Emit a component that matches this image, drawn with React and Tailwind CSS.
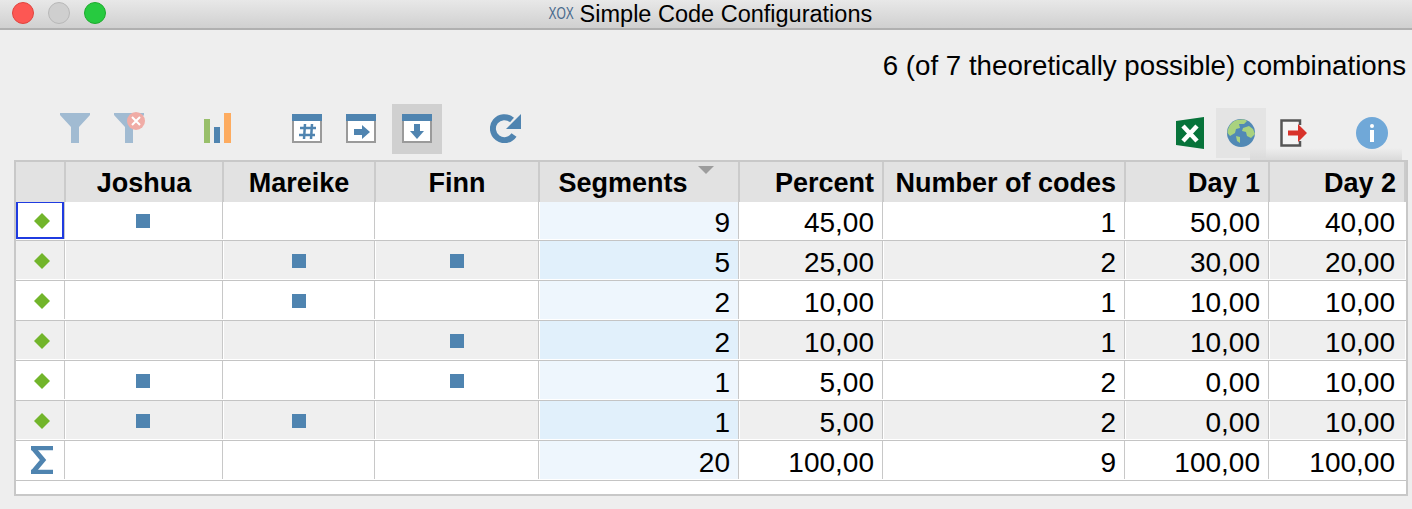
const rows = [
  { j: 1, m: 0, f: 0, v: ["9", "45,00", "1", "50,00", "40,00"] },
  { j: 0, m: 1, f: 1, v: ["5", "25,00", "2", "30,00", "20,00"] },
  { j: 0, m: 1, f: 0, v: ["2", "10,00", "1", "10,00", "10,00"] },
  { j: 0, m: 0, f: 1, v: ["2", "10,00", "1", "10,00", "10,00"] },
  { j: 1, m: 0, f: 1, v: ["1", "5,00", "2", "0,00", "10,00"] },
  { j: 1, m: 1, f: 0, v: ["1", "5,00", "2", "0,00", "10,00"] },
];

const gridCols = "grid grid-cols-[50px_158px_152px_164px_200px_144px_242px_144px_1fr]";

function Square({ left }) {
  return <div className={`w-3.5 h-3.5 mt-0.5 bg-[#4f84b0] ${left ? "mr-0.5" : ""}`} />;
}

function Diamond() {
  return (
    <svg width="16" height="16" viewBox="0 0 16 16" className="mt-0.5">
      <path d="M8 0 L16 8 L8 16 L0 8 Z" fill="#72b52b" />
    </svg>
  );
}

function Sigma() {
  return (
    <svg width="24" height="28" viewBox="0 0 24 28">
      <path d="M1 2 H23 M23 26 H1" stroke="#4f84b0" strokeWidth="4.5" fill="none" />
      <path d="M3 2 L13 14 L3 26" stroke="#4f84b0" strokeWidth="5" fill="none" />
    </svg>
  );
}

function Filter({ x }) {
  return (
    <div className="relative w-7.5 h-7.5 -mt-0.5">
      <svg width="30" height="30" viewBox="0 0 30 30">
        <path d="M0 0 H30 V2 L19 14 V30 H11 V14 L0 2 Z" fill="#a1bbd2" />
      </svg>
      {x && (
        <div className="absolute -top-px -right-px w-4.5 h-4.5 rounded-full bg-[#f0aca6] flex items-center justify-center">
          <svg width="10" height="10" viewBox="0 0 10 10">
            <path d="M1 1 L9 9 M9 1 L1 9" stroke="#fff" strokeWidth="2" />
          </svg>
        </div>
      )}
    </div>
  );
}

function Bars() {
  return (
    <svg width="28" height="30" viewBox="0 0 28 30" className="-mt-0.5">
      <rect x="0" y="6" width="6" height="24" fill="#98bf6a" />
      <rect x="10" y="14" width="6" height="16" fill="#4f84b0" />
      <rect x="20" y="0" width="7" height="30" fill="#fdab5f" />
    </svg>
  );
}

function TableIcon({ children }) {
  return (
    <svg width="30" height="30" viewBox="0 0 30 30">
      <rect x="0" y="0" width="30" height="7" fill="#4f84b0" />
      <rect x="0" y="7" width="30" height="22" fill="#fff" />
      <path d="M1 7 V28 H29 V7" fill="none" stroke="#9a9a9a" strokeWidth="2" />
      {children}
    </svg>
  );
}

function Refresh() {
  return (
    <svg width="32" height="30" viewBox="0 0 32 30" className="-mt-0.5">
      <path d="M24 22 A11.5 11.5 0 1 1 22 7" fill="none" stroke="#4f84b0" strokeWidth="6" />
      <path d="M31 1 V16 H16 Z" fill="#4f84b0" />
    </svg>
  );
}

function Excel() {
  return (
    <svg width="28" height="32" viewBox="0 0 28 32">
      <path d="M0 4 L28 0 V32 L0 28 Z" fill="#07733a" />
      <path d="M7 9 L21 24 M21 9 L7 24" stroke="#fff" strokeWidth="4.5" />
    </svg>
  );
}

function Globe() {
  return (
    <svg width="28" height="28" viewBox="0 0 28 28">
      <circle cx="14" cy="14" r="14" fill="#5189b5" />
      <path d="M6 3 C10 0 18 0 20 2 L17 5 L12 5 L13 9 L9 10 L8 14 L3 17 L0.5 14 C0.5 10 3 5 6 3 Z" fill="#a9d27e" />
      <path d="M16 9 L22 7 L26 10 L28 15 L24 19 L20 17 L19 13 L15 12 Z" fill="#a9d27e" />
      <path d="M9 17 L13 18 L13 24 L10 22 Z" fill="#a9d27e" />
    </svg>
  );
}

function Exit() {
  return (
    <svg width="28" height="28" viewBox="0 0 28 28">
      <path d="M20 6 V1.5 H1.5 V26.5 H20 V22" fill="#f4f4f4" stroke="#555" strokeWidth="2.5" />
      <path d="M8 11.5 H18 V5 L27 14 L18 23 V16.5 H8 Z" fill="#d8322a" />
    </svg>
  );
}

function Info() {
  return (
    <div className="w-8 h-8 rounded-full bg-[#70a8d8] flex flex-col items-center justify-center gap-0.5">
      <div className="w-1 h-1 bg-white rounded-full" />
      <div className="w-1 h-3 bg-white" />
    </div>
  );
}

function HeaderCell({ children, align = "center", sorted }) {
  const al = align === "right" ? "justify-end pr-2" : sorted ? "justify-center pr-8" : "justify-center";
  return (
    <div className={`relative flex items-center pt-0.5 ${al} border-r-2 border-[#cbcbcb] font-bold text-[27px] leading-7 text-black`}>
      {children}
      {sorted && (
        <div className="absolute top-1 right-6 w-0 h-0 border-l-8 border-r-8 border-t-8 border-l-transparent border-r-transparent border-t-[#9d9d9d]" />
      )}
    </div>
  );
}

function Cell({ children, center, tint, last }) {
  const al = center ? "justify-center" : last ? "justify-end pr-2.5 pt-1.5" : "justify-end pr-2 pt-1.5";
  return (
    <div className="flex pr-px pb-px">
      <div className={`flex-1 flex items-center ${al} ${last ? "" : "border-r"} border-[#c8c8c8] ${tint}`}>
        {children}
      </div>
    </div>
  );
}

function Row({ icon, j, m, f, v, alt, first }) {
  const plain = alt ? "bg-[#efefef]" : "bg-white";
  const tint = alt ? "bg-[#e1f0fb]" : "bg-[#eef6fd]";
  return (
    <div className={`${gridCols} h-10 border-b border-[#c4c4c4] bg-white text-[28px] leading-7 text-black`}>
      <Cell center tint={plain}>
        <div className={`flex-1 self-stretch flex items-center justify-center pl-1 ${first ? "border-2 border-[#1f3be0]" : ""}`}>{icon}</div>
      </Cell>
      <Cell center tint={plain}>{j ? <Square left /> : null}</Cell>
      <Cell center tint={plain}>{m ? <Square /> : null}</Cell>
      <Cell center tint={plain}>{f ? <Square /> : null}</Cell>
      <Cell tint={tint}>{v[0]}</Cell>
      <Cell tint={plain}>{v[1]}</Cell>
      <Cell tint={plain}>{v[2]}</Cell>
      <Cell tint={plain}>{v[3]}</Cell>
      <Cell last tint={plain}>{v[4]}</Cell>
    </div>
  );
}

export default function App() {
  return (
    <div className="relative w-[1412px] h-[509px] overflow-hidden bg-[#eeeeee] flex flex-col text-[27.7px] leading-7 font-['Liberation_Sans',sans-serif]">
      <div className="relative h-7.5 flex items-center justify-center border-b-2 border-[#b0b0b0] bg-gradient-to-b from-[#e8e8e8] to-[#d0d0d0]">
        <div className="absolute left-3 top-0.5 flex gap-3.5">
          <div className="w-5.5 h-5.5 rounded-full bg-[#fd5753] border border-[#e0443e]" />
          <div className="w-5.5 h-5.5 rounded-full bg-[#cfcfcf] border border-[#b8b8b8]" />
          <div className="w-5.5 h-5.5 rounded-full bg-[#27ca40] border border-[#1eab2e]" />
        </div>
        <div className="flex items-center gap-1.5">
          <span className="text-base text-[#47698c] scale-x-75 origin-right">XOX</span>
          <span className="text-[23.5px] text-black">Simple Code Configurations</span>
        </div>
      </div>

      <div className="flex justify-end pr-1.5 pt-5.5 h-[74px] text-black">
        6 (of 7 theoretically possible) combinations
      </div>

      <div className="flex h-14 items-start justify-between">
        <div className="flex items-center pl-15">
          <Filter />
          <div className="ml-6"><Filter x /></div>
          <div className="ml-15"><Bars /></div>
          <div className="ml-15 flex items-center">
            <TableIcon>
              <path d="M13 10 L12 25 M20 10 L19 25 M8 14 H24 M7 21 H23" stroke="#4f84b0" strokeWidth="2.5" fill="none" />
            </TableIcon>
            <div className="ml-6">
              <TableIcon>
                <path d="M8 15 H16 V11 L24 18 L16 25 V21 H8 Z" fill="#4f84b0" />
              </TableIcon>
            </div>
            <div className="ml-4 w-12.5 h-12.5 bg-[#d0d0d0] flex items-center justify-center">
              <TableIcon>
                <path d="M12 10 H18 V17 H22 L15 25 L8 17 H12 Z" fill="#4f84b0" />
              </TableIcon>
            </div>
          </div>
          <div className="ml-12"><Refresh /></div>
        </div>
        <div className="flex items-center pr-6 translate-y-1">
          <Excel />
          <div className="ml-3 w-12.5 h-12.5 bg-[#e4e4e4] flex items-center justify-center"><Globe /></div>
          <div className="ml-3.5"><Exit /></div>
          <div className="ml-12"><Info /></div>
        </div>
      </div>

      <div className="absolute top-[148px] right-2.5 w-38 h-3 bg-gradient-to-b from-transparent to-[#dadada]" />

      <div className="relative ml-3.5 mr-1 h-[336px] border-2 border-[#c8c8c8] bg-white">
        <div className={`${gridCols} relative h-10 bg-[#e2e2e2]`}>
          <HeaderCell />
          <HeaderCell>Joshua</HeaderCell>
          <HeaderCell>Mareike</HeaderCell>
          <HeaderCell>Finn</HeaderCell>
          <HeaderCell sorted>Segments</HeaderCell>
          <HeaderCell align="right">Percent</HeaderCell>
          <HeaderCell align="right">Number of codes</HeaderCell>
          <HeaderCell align="right">Day 1</HeaderCell>
          <HeaderCell align="right">Day 2</HeaderCell>
        </div>
        <div className="-mt-px">
          {rows.map((r, i) => (
            <Row key={i} {...r} icon={<Diamond />} alt={i % 2 === 1} first={i === 0} />
          ))}
          <Row icon={<Sigma />} v={["20", "100,00", "9", "100,00", "100,00"]} />
        </div>
      </div>
    </div>
  );
}
